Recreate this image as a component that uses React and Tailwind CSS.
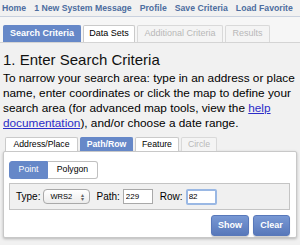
import React, { useState } from 'react';

const navLinks = ['Home', '1 New System Message', 'Profile', 'Save Criteria', 'Load Favorite'];

const mainTabs = [
  { label: 'Search Criteria', state: 'active', w: 'w-[78px]' },
  { label: 'Data Sets', state: 'normal', w: 'w-[52px]' },
  { label: 'Additional Criteria', state: 'disabled', w: 'w-[86px]' },
  { label: 'Results', state: 'disabled', w: 'w-[45px]' },
];

const subTabs = [
  { label: 'Address/Place', state: 'normal', w: 'w-[73px]' },
  { label: 'Path/Row', state: 'active', w: 'w-[53px]' },
  { label: 'Feature', state: 'normal', w: 'w-[44px]' },
  { label: 'Circle', state: 'disabled', w: 'w-[36px]' },
];

const tabClass = {
  active: 'bg-[#6688c8] border-[#6688c8] text-white font-bold',
  normal: 'bg-white border-[#cacaca] text-black',
  disabled: 'bg-[#f4f4f4] border-[#d9d9d9] text-[#b8b8b8]',
};

const Tab = ({ label, state, className }) => (
  <div className={`border border-b-0 rounded-t-[2px] flex items-center justify-center whitespace-nowrap ${tabClass[state]} ${className}`}>
    {label}
  </div>
);

export default function App() {
  const [row, setRow] = useState('82');
  const [path, setPath] = useState('229');

  return (
    <div className="w-[300px] h-[245px] overflow-hidden bg-[#f1f1f1] font-['Liberation_Sans',Arial,sans-serif]">
      {/* Top links */}
      <div className="h-[17px] flex items-center gap-[8px] pl-[2px] border-b border-[#c9d1de] text-[8.7px] font-bold text-[#4d6d9f]">
        {navLinks.map(l => (
          <span key={l} className="leading-none whitespace-nowrap">{l}</span>
        ))}
      </div>

      {/* Main tabs */}
      <div className="flex items-end gap-[2px] pl-[3px] pt-[8px] border-b border-[#d4d4d4] bg-[#f6f6f6] text-[9px]">
        {mainTabs.map(t => (
          <Tab key={t.label} label={t.label} state={t.state} className={`h-[17px] ${t.w}`} />
        ))}
      </div>

      <div className="px-[3px]">
        <h1 className="text-[15px] leading-[18px] mt-[8px] text-[#111]">1. Enter Search Criteria</h1>
        <p className="text-[11.8px] leading-[15px] text-black mt-[2px] w-[296px]">
          To narrow your search area: type in an address or place name, enter coordinates or click the map to define your search area (for advanced map tools, view the{' '}
          <a className="text-[#2c2cc8] underline">help documentation</a>), and/or choose a date range.
        </p>

        {/* Sub tabs */}
        <div className="flex items-end gap-[2px] mt-[6px] pl-[2px] text-[8.7px]">
          {subTabs.map(t => (
            <Tab key={t.label} label={t.label} state={t.state} className={`h-[14px] ${t.w}`} />
          ))}
        </div>

        {/* Panel */}
        <div className="bg-white border border-[#c8c8c8] rounded-[2px] shadow-[0_1px_3px_rgba(0,0,0,0.25)] w-[294px] pl-[5px] pr-[6px] pt-[9px] pb-[1px]">
          <div className="flex text-[8.7px]">
            <div className="w-[39px] h-[18px] flex items-center justify-center bg-[#6688c8] text-white rounded-l-[3px] border border-[#6688c8]">
              Point
            </div>
            <div className="w-[50px] h-[18px] flex items-center justify-center bg-white border border-l-0 border-[#c0c0c0] rounded-r-[3px] text-black">
              Polygon
            </div>
          </div>

          <div className="mt-[4px] h-[27px] bg-[#f0f0f0] border border-[#c4c4c4] flex items-center pl-[6px] text-[10px] text-black">
            <span>Type:</span>
            <div className="ml-[3px] w-[47px] h-[15px] border border-[#a9a9a9] rounded-[4px] bg-gradient-to-b from-white to-[#ececec] flex items-center justify-between pl-[6px] pr-[5px] text-[7.5px]">
              <span>WRS2</span>
              <span className="text-[6px] leading-[4px] text-[#666] flex flex-col">
                <span>▴</span>
                <span>▾</span>
              </span>
            </div>
            <span className="ml-[6px]">Path:</span>
            <input
              value={path}
              onChange={e => setPath(e.target.value)}
              className="ml-[3px] w-[30px] h-[15px] border border-[#a9a9a9] bg-white px-[2px] text-[8px] outline-none"
            />
            <span className="ml-[7px]">Row:</span>
            <input
              value={row}
              onChange={e => setRow(e.target.value)}
              className="ml-[3px] w-[31px] h-[16px] border-2 border-[#9ab8e4] rounded-[2px] bg-white px-[1px] text-[8px] outline-none"
            />
          </div>

          <div className="flex justify-end gap-[4px] mt-[5px] text-[9px] font-bold text-white">
            <button className="w-[38px] h-[21px] rounded-[3px] bg-gradient-to-b from-[#7898d4] to-[#5878ba] border border-[#5878ba] shadow-[0_1px_1px_rgba(0,0,0,0.2)]">Show</button>
            <button className="w-[37px] h-[21px] rounded-[3px] bg-gradient-to-b from-[#7898d4] to-[#5878ba] border border-[#5878ba] shadow-[0_1px_1px_rgba(0,0,0,0.2)]">Clear</button>
          </div>
        </div>
      </div>
    </div>
  );
}
